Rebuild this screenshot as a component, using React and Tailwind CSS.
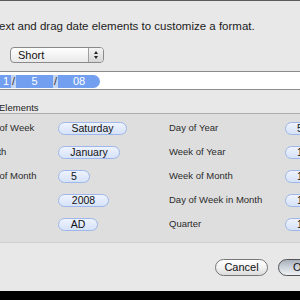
import React from "react";

const font = { fontFamily: '"Liberation Sans", Arial, sans-serif' };

function Pill({ children, w }) {
  return (
    <div
      className={`h-[13px] rounded-full border border-[#9db7ea] bg-gradient-to-b from-[#eef3fd] to-[#d6e2f8] flex items-center justify-center text-[10.5px] leading-none text-[#111] ${w}`}
    >
      {children}
    </div>
  );
}

function Row({ l, lp, lw, r, rp }) {
  return (
    <div className="h-[24px] flex items-center">
      <div className="w-[78px] shrink-0 text-[9.5px] text-[#2b2b2b] whitespace-nowrap">{l}</div>
      <div className="w-[111px] shrink-0">
        <Pill w={lw}>{lp}</Pill>
      </div>
      <div className="w-[116px] shrink-0 text-[9.5px] text-[#2b2b2b] whitespace-nowrap">{r}</div>
      <div className="w-[40px] shrink-0">
        <div className="h-[13px] rounded-l-full border border-[#9db7ea] bg-gradient-to-b from-[#eef3fd] to-[#d6e2f8] flex items-center pl-[11px] text-[10.5px] leading-none text-[#111]">
          {rp}
        </div>
      </div>
    </div>
  );
}

export default function App() {
  return (
    <div className="w-[300px] h-[300px] overflow-hidden bg-[#e8e8e8] flex flex-col" style={font}>
      <div className="h-[1px] bg-[#5a5a5a] shrink-0" />
      <div className="h-[70px] shrink-0 flex flex-col pt-[18px]">
        <div className="text-[11.5px] leading-[14px] text-[#1c1c1c] -ml-[1px] whitespace-nowrap">
          ext and drag date elements to customize a format.
        </div>
        <div className="mt-[14px] ml-[10px] w-[94px] h-[16px] rounded-[4px] border border-[#8a8a8a] bg-gradient-to-b from-[#ffffff] to-[#e9e9e9] flex items-center">
          <div className="flex-1 pl-[7px] text-[11px] leading-none text-[#111]">Short</div>
          <div className="w-[15px] h-full border-l border-[#a0a0a0] rounded-r-[3px] bg-gradient-to-b from-[#f4f4f4] to-[#d6d6d6] flex flex-col items-center justify-center gap-[2px]">
            <div className="w-0 h-0 border-l-[2.5px] border-r-[2.5px] border-b-[3px] border-l-transparent border-r-transparent border-b-[#222]" />
            <div className="w-0 h-0 border-l-[2.5px] border-r-[2.5px] border-t-[3px] border-l-transparent border-r-transparent border-t-[#222]" />
          </div>
        </div>
      </div>
      <div className="h-[19px] shrink-0 border-y border-[#8c8c8c] bg-white flex items-end pb-[1px]">
        <div className="h-[13px] flex text-[11px] leading-none">
          <div className="w-[11px] bg-[#739ff0] text-white flex items-center justify-end pr-[2px]">1</div>
          <div className="w-[5px] bg-[#c3d4f2] text-[#333] flex items-center justify-center">/</div>
          <div className="w-[37px] bg-[#739ff0] text-white flex items-center justify-center">5</div>
          <div className="w-[5px] bg-[#c3d4f2] text-[#333] flex items-center justify-center">/</div>
          <div className="w-[42px] bg-[#739ff0] text-white flex items-center justify-center rounded-r-full">08</div>
        </div>
      </div>
      <div className="h-[24px] shrink-0 border-b border-[#adadad] flex items-end pb-[1px]">
        <div className="text-[9.5px] leading-none text-[#222] -ml-[1px]">Elements</div>
      </div>
      <div className="h-[129px] shrink-0 bg-[#dedede] border-b border-[#d0d0d0] pt-[2px]">
        <div className="-ml-[20px]">
          <Row l="Day of Week" lp="Saturday" lw="w-[69px]" r="Day of Year" rp="5" />
          <Row l="Month" lp="January" lw="w-[62px]" r="Week of Year" rp="1" />
          <Row l="Day of Month" lp="5" lw="w-[32px]" r="Week of Month" rp="1" />
          <Row l="Year" lp="2008" lw="w-[51px]" r="Day of Week in Month" rp="1" />
          <Row l="Era" lp="AD" lw="w-[40px]" r="Quarter" rp="1" />
        </div>
      </div>
      <div className="flex-1 flex items-start pt-[16px] pl-[215px] gap-[10px]">
        <div className="w-[53px] h-[17px] shrink-0 rounded-full border border-[#777] bg-gradient-to-b from-[#ffffff] via-[#f2f2f2] to-[#dcdcdc] flex items-center justify-center text-[11px] leading-none text-[#111]">
          Cancel
        </div>
        <div className="w-[60px] h-[17px] shrink-0 rounded-full border border-[#555] bg-gradient-to-b from-[#a8b0bc] via-[#cfd5dd] to-[#eef1f4] flex items-center pl-[14px] text-[11px] leading-none text-[#111]">
          OK
        </div>
      </div>
      <div className="h-[9px] shrink-0 bg-black" />
    </div>
  );
}
